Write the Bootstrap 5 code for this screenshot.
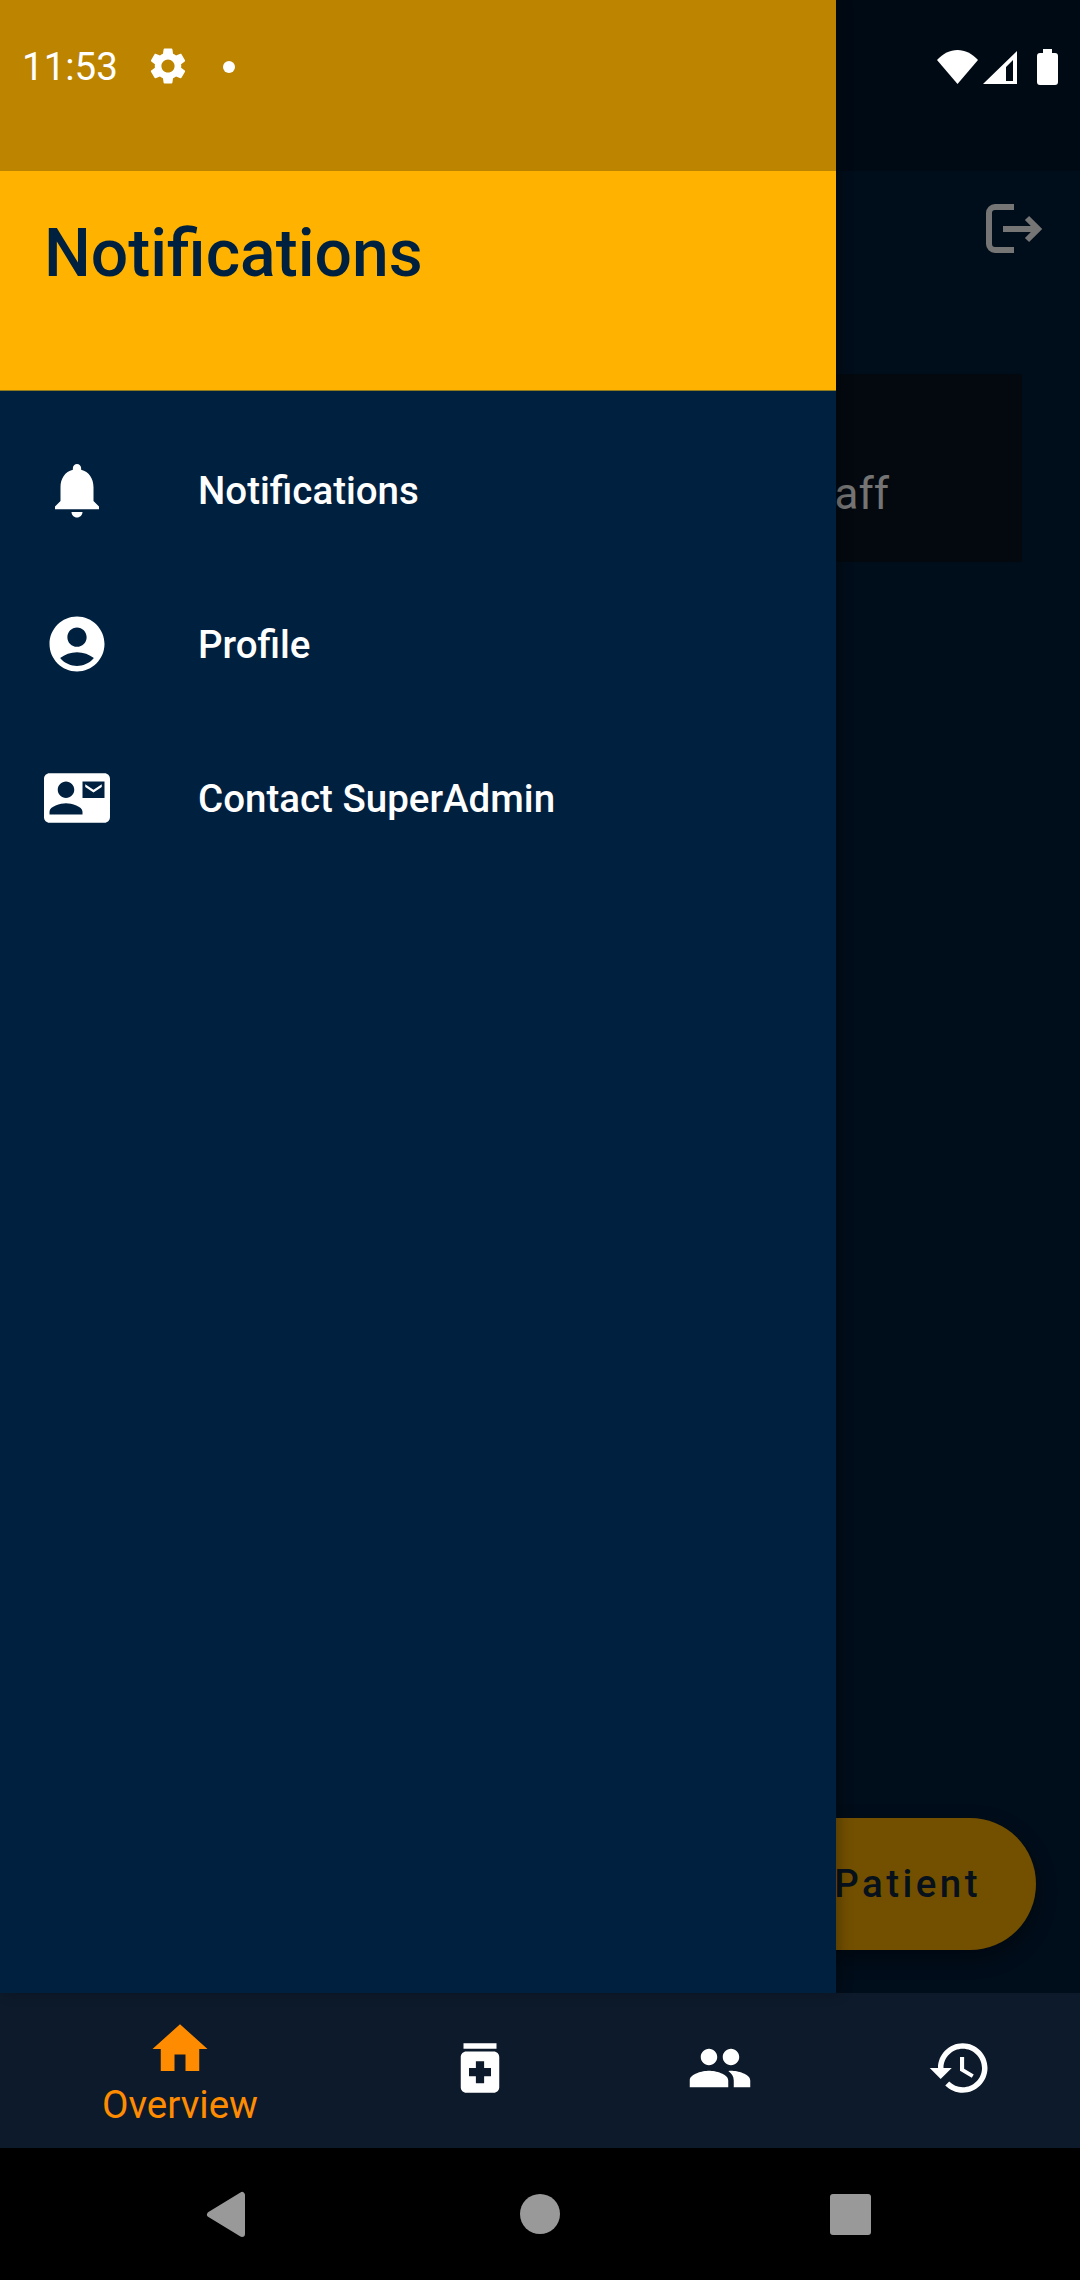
<!DOCTYPE html>
<html lang="en">
<head>
    <meta charset="UTF-8">
    <title>Notifications drawer</title>
    <link href="https://cdn.jsdelivr.net/npm/bootstrap@5.3.3/dist/css/bootstrap.min.css" rel="stylesheet">
    <style>
        html, body { margin: 0; background: #000; }
        .phone { width: 1080px; height: 2280px; overflow: hidden; font-family: Roboto, "Liberation Sans", sans-serif; }
        .screen { height: 1993px; background: #000d1a; }
        .sys-right { height: 171px; background: #000a14; padding: 49px 22px 0 0; gap: 2px; }
        .sys-batt { margin-left: 17px; }
        .app-top { height: 203px; padding: 33px 38px 0 0; }
        .staff-box { height: 188px; margin-left: 58px; margin-right: 58px; background: #03090f; padding: 93px 0 0 0; }
        .staff-txt { font-size: 44px; line-height: 54px; color: #747474; padding-left: 736px; }
        .fab-btn { right: 44px; top: 1818px; width: 500px; height: 132px; border-radius: 66px; background: #735000; box-shadow: 0 8px 20px rgba(0,0,0,.35); }
        .fab-txt { font-size: 38.5px; font-weight: 500; letter-spacing: 3.44px; color: #07111c; padding-right: 55px; }
        .drawer { left: 0; top: 0; width: 836px; height: 1993px; background: #00203f; box-shadow: 4px 0 12px rgba(0,0,0,.25); }
        .drawer-sys { height: 171px; background: #bd8400; padding: 44px 0 0 22px; color: #fff; }
        .sys-time { font-size: 38.5px; width: 120px; line-height: 46px; }
        .sys-dot { width: 12px; height: 12px; background: #fff; border-radius: 50%; margin: 17px 0 0 33px; }
        .drawer-head { height: 220px; background: #ffb300; border-bottom: 1px solid #8f7a1c; padding: 45px 0 0 44px; }
        .drawer-title { font-size: 66px; font-weight: 500; line-height: 76px; color: #00203f; margin: 0; }
        .drawer-menu { padding-top: 22px; }
        .menu-row { height: 154px; padding-left: 44px; gap: 88px; color: #fff; font-size: 38.5px; font-weight: 500; }
        .menu-row span { margin-top: 1px; }
        .ic66 { width: 66px; height: 66px; fill: currentColor; flex: none; }
        .bottom-tabs { height: 155px; background: #0d1a2b; color: #fff; }
        .tab-wide { width: 360px; color: #ff8c00; padding-top: 23px; }
        .tab-wide span { font-size: 38.5px; line-height: 36px; margin-top: 5px; }
        .tab-plain { width: 240px; padding-top: 42px; }
        .android-bar { height: 132px; background: #000; }
        .android-bar svg { fill: #999; }
    </style>
</head>
<body>
<div class="phone position-relative">

    <!-- Page behind the drawer -->
    <div class="screen">
        <div class="sys-right d-flex justify-content-end align-items-start">
            <svg width="42" height="36" viewBox="0 0 42 36"><path d="M20.5 35L0 11C6 4.500 13 1 20.500 1S35 4.500 41 11z" fill="#fff"/></svg>
            <svg width="36" height="36" viewBox="0 0 36 36"><path d="M36 2v33H2zM32 11l-7 7v14h7z" fill="#fff" fill-rule="evenodd"/></svg>
            <svg class="sys-batt" width="22" height="36" viewBox="0 0 22 36"><path d="M7 0h9v4h3c2 0 3 1 3 3v26c0 2-1 3-3 3H4c-2 0-3-1-3-3V7c0-2 1-3 3-3h3z" fill="#fff"/></svg>
        </div>
        <div class="app-top d-flex justify-content-end">
            <svg width="56" height="52" viewBox="0 0 56 52" fill="none" stroke="#757575" stroke-width="6"><path d="M28 3H9a6 6 0 0 0-6 6v31a6 6 0 0 0 6 6h19"/><path d="M17 25h33M41 14l11 11-11 11"/></svg>
        </div>
        <div class="staff-box">
            <div class="staff-txt">Staff</div>
        </div>
        <div class="fab-btn position-absolute d-flex align-items-center justify-content-end">
            <span class="fab-txt">Add Patient</span>
        </div>
    </div>

    <!-- Drawer -->
    <div class="drawer position-absolute d-flex flex-column">
        <div class="drawer-sys d-flex align-items-start">
            <span class="sys-time">11:53</span>
            <svg width="44" height="44" viewBox="0 0 24 24" fill="#fff" class="ms-1"><path d="M19.14 12.94c.04-.3.06-.61.06-.94 0-.32-.02-.64-.07-.94l2.03-1.58c.18-.14.23-.41.12-.61l-1.92-3.32c-.12-.22-.37-.29-.59-.22l-2.39.96c-.5-.38-1.03-.7-1.62-.94l-.36-2.54c-.04-.24-.24-.41-.48-.41h-3.84c-.24 0-.43.17-.47.41l-.36 2.54c-.59.24-1.13.57-1.62.94l-2.39-.96c-.22-.08-.47 0-.59.22L2.74 8.87c-.12.21-.08.47.12.61l2.03 1.58c-.05.3-.09.63-.09.94s.02.64.07.94l-2.03 1.58c-.18.14-.23.41-.12.61l1.92 3.32c.12.22.37.29.59.22l2.39-.96c.5.38 1.03.7 1.62.94l.36 2.54c.05.24.24.41.48.41h3.84c.24 0 .44-.17.47-.41l.36-2.54c.59-.24 1.13-.56 1.62-.94l2.39.96c.22.08.47 0 .59-.22l1.92-3.32c.12-.22.07-.47-.12-.61l-2.01-1.58zM12 15.6c-1.98 0-3.6-1.62-3.6-3.6s1.62-3.6 3.6-3.6 3.6 1.62 3.6 3.6-1.62 3.6-3.6 3.6z"/></svg>
            <span class="sys-dot"></span>
        </div>
        <div class="drawer-head">
            <h1 class="drawer-title">Notifications</h1>
        </div>
        <div class="drawer-menu">
            <div class="menu-row d-flex align-items-center">
                <svg class="ic66" viewBox="0 0 24 24"><path d="M12 22c1.1 0 2-.9 2-2h-4c0 1.1.89 2 2 2zm6-6v-5c0-3.07-1.64-5.64-4.5-6.32V4c0-.83-.67-1.5-1.5-1.5s-1.5.67-1.5 1.5v.68C7.63 5.36 6 7.92 6 11v5l-2 2v1h16v-1l-2-2z"/></svg>
                <span>Notifications</span>
            </div>
            <div class="menu-row d-flex align-items-center">
                <svg class="ic66" viewBox="0 0 24 24"><path d="M12 2C6.48 2 2 6.48 2 12s4.48 10 10 10 10-4.48 10-10S17.52 2 12 2zm0 4c1.93 0 3.5 1.57 3.5 3.5S13.93 13 12 13s-3.5-1.57-3.5-3.5S10.07 6 12 6zm0 14c-2.03 0-4.43-.82-6.14-2.88C7.55 15.8 9.68 15 12 15s4.45.8 6.14 2.12C16.43 19.18 14.03 20 12 20z"/></svg>
                <span>Profile</span>
            </div>
            <div class="menu-row d-flex align-items-center">
                <svg class="ic66" viewBox="0 0 24 24"><path d="M21 8V7l-3 2-3-2v1l3 2 3-2zm1-5H2C.9 3 0 3.9 0 5v14c0 1.1.9 2 2 2h20c1.1 0 1.99-.9 1.99-2L24 5c0-1.1-.9-2-2-2zM8 6c1.66 0 3 1.34 3 3s-1.34 3-3 3-3-1.34-3-3 1.34-3 3-3zm6 12H2v-1c0-2 4-3.1 6-3.1s6 1.1 6 3.1v1zm8-6h-8V6h8v6z"/></svg>
                <span>Contact SuperAdmin</span>
            </div>
        </div>
    </div>

    <!-- Bottom tabs -->
    <div class="bottom-tabs d-flex">
        <div class="tab-wide d-flex flex-column align-items-center">
            <svg class="ic66" viewBox="0 0 24 24"><path d="M10 20v-6h4v6h5v-8h3L12 3 2 12h3v8z"/></svg>
            <span>Overview</span>
        </div>
        <div class="tab-plain d-flex justify-content-center">
            <svg class="ic66" viewBox="0 0 24 24"><path d="M6 3h12v2H6zm11 3H7c-1.1 0-2 .9-2 2v11c0 1.1.9 2 2 2h10c1.1 0 2-.9 2-2V8c0-1.1-.9-2-2-2zm-1 9h-2.5v2.5h-3V15H8v-3h2.5V9.5h3V12H16v3z"/></svg>
        </div>
        <div class="tab-plain d-flex justify-content-center">
            <svg class="ic66" viewBox="0 0 24 24"><path d="M16 11c1.66 0 2.99-1.34 2.99-3S17.66 5 16 5c-1.66 0-3 1.34-3 3s1.34 3 3 3zm-8 0c1.66 0 2.99-1.34 2.99-3S9.66 5 8 5C6.34 5 5 6.34 5 8s1.34 3 3 3zm0 2c-2.33 0-7 1.17-7 3.5V19h14v-2.5c0-2.33-4.67-3.5-7-3.5zm8 0c-.29 0-.62.02-.97.05 1.16.84 1.97 1.97 1.97 3.45V19h6v-2.5c0-2.33-4.67-3.5-7-3.5z"/></svg>
        </div>
        <div class="tab-plain d-flex justify-content-center">
            <svg class="ic66" viewBox="0 0 24 24"><path d="M13 3c-4.97 0-9 4.03-9 9H1l3.89 3.89.07.14L9 12H6c0-3.87 3.13-7 7-7s7 3.13 7 7-3.13 7-7 7c-1.93 0-3.68-.79-4.94-2.06l-1.42 1.42C8.27 19.99 10.51 21 13 21c4.97 0 9-4.03 9-9s-4.03-9-9-9zm-1 5v5l4.28 2.54.72-1.21-3.5-2.08V8H12z"/></svg>
        </div>
    </div>

    <!-- Android navigation -->
    <div class="android-bar d-flex align-items-center justify-content-center">
        <svg width="1080" height="132" viewBox="0 0 1080 132">
            <path d="M242 47v39L210 66.500z" stroke="#999" stroke-width="6" stroke-linejoin="round"/>
            <circle cx="540" cy="66" r="20"/>
            <rect x="830" y="46" width="41" height="41" rx="3"/>
        </svg>
    </div>
</div>
<script src="https://cdn.jsdelivr.net/npm/bootstrap@5.3.3/dist/js/bootstrap.bundle.min.js"></script>
</body>
</html>
